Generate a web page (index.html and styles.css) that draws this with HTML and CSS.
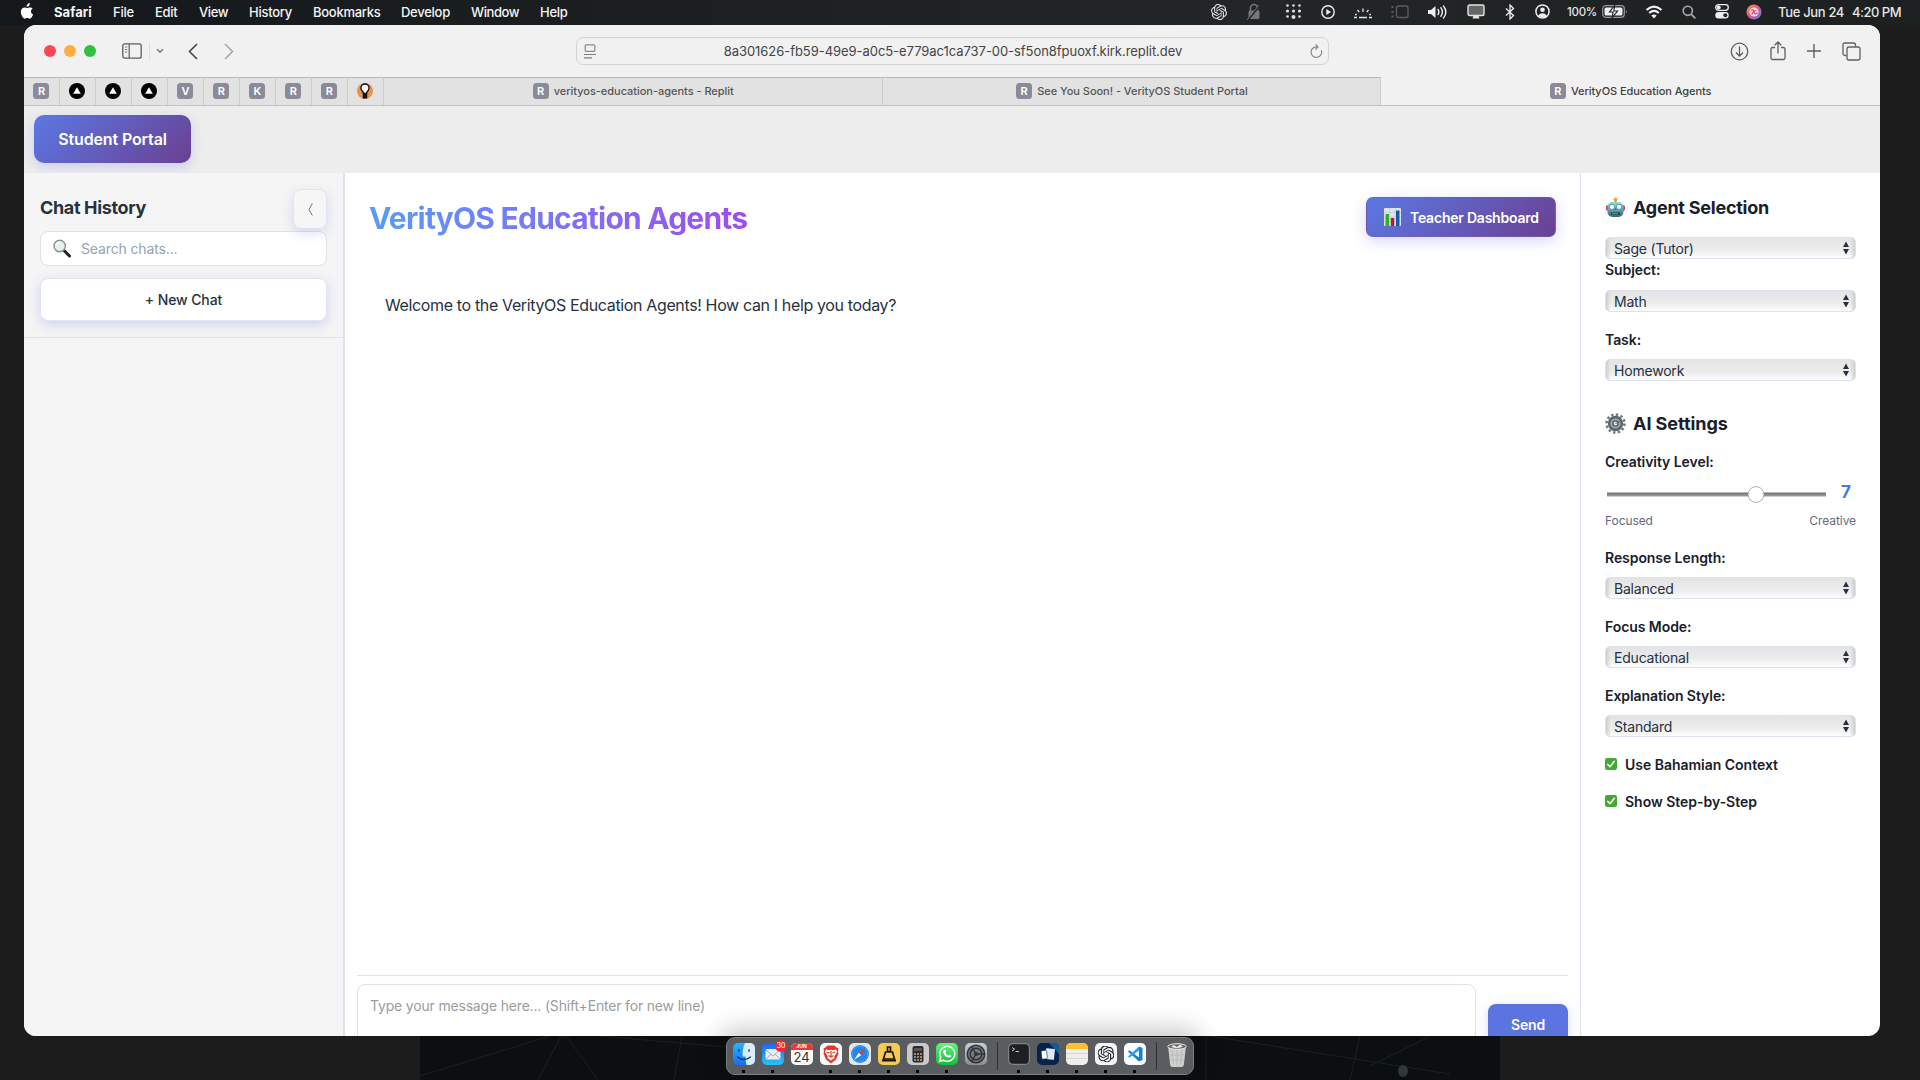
FILE: index.html
```html
<!DOCTYPE html>
<html lang="en">
<head>
<meta charset="utf-8">
<title>VerityOS Education Agents</title>
<link rel="stylesheet" href="styles.css">
</head>
<body>
<svg width="0" height="0" class="defs">
  <defs>
    <symbol id="knot" viewBox="0 0 24 24"><path fill="currentColor" d="M22.2819 9.8211a5.9847 5.9847 0 0 0-.5157-4.9108 6.0462 6.0462 0 0 0-6.5098-2.9A6.0651 6.0651 0 0 0 4.9807 4.1818a5.9847 5.9847 0 0 0-3.9977 2.9 6.0462 6.0462 0 0 0 .7427 7.0966 5.98 5.98 0 0 0 .511 4.9107 6.051 6.051 0 0 0 6.5146 2.9001A5.9847 5.9847 0 0 0 13.2599 24a6.0557 6.0557 0 0 0 5.7718-4.2058 5.9894 5.9894 0 0 0 3.9977-2.9001 6.0557 6.0557 0 0 0-.7475-7.0729zm-9.022 12.6081a4.4755 4.4755 0 0 1-2.8764-1.0408l.1419-.0804 4.7783-2.7582a.7948.7948 0 0 0 .3927-.6813v-6.7369l2.02 1.1686a.071.071 0 0 1 .038.052v5.5826a4.504 4.504 0 0 1-4.4945 4.4944zm-9.6607-4.1254a4.4708 4.4708 0 0 1-.5346-3.0137l.142.0852 4.783 2.7582a.7712.7712 0 0 0 .7806 0l5.8428-3.3685v2.3324a.0804.0804 0 0 1-.0332.0615L9.74 19.9502a4.4992 4.4992 0 0 1-6.1408-1.6464zM2.3408 7.8956a4.485 4.485 0 0 1 2.3655-1.9728V11.6a.7664.7664 0 0 0 .3879.6765l5.8144 3.3543-2.0201 1.1685a.0757.0757 0 0 1-.071 0l-4.8303-2.7865A4.504 4.504 0 0 1 2.3408 7.872zm16.5963 3.8558L13.1038 8.364 15.1192 7.2a.0757.0757 0 0 1 .071 0l4.8303 2.7913a4.4944 4.4944 0 0 1-.6765 8.1042v-5.6772a.79.79 0 0 0-.407-.667zm2.0107-3.0231l-.142-.0852-4.7735-2.7818a.7759.7759 0 0 0-.7854 0L9.409 9.2297V6.8974a.0662.0662 0 0 1 .0284-.0615l4.8303-2.7866a4.4992 4.4992 0 0 1 6.6802 4.66zM8.3065 12.863l-2.02-1.1638a.0804.0804 0 0 1-.038-.0567V6.0742a4.4992 4.4992 0 0 1 7.3757-3.4537l-.142.0805L8.704 5.459a.7948.7948 0 0 0-.3927.6813zm1.0976-2.3654l2.602-1.4998 2.6069 1.4998v2.9994l-2.5974 1.4997-2.6067-1.4997Z"/></symbol>
    <symbol id="updown" viewBox="0 0 6 14"><path d="M3 0.500 6 6H0zM3 13.500 6 8H0z" fill="#253142"/></symbol>
    <symbol id="check" viewBox="0 0 12 12"><rect width="12" height="12" rx="2" fill="#43a935"/><path d="M2.800 6.400 5 8.800 9.300 3.300" fill="none" stroke="#fff" stroke-width="1.500" stroke-linecap="round" stroke-linejoin="round"/></symbol>
    <symbol id="vercel" viewBox="0 0 16 16"><circle cx="8" cy="8" r="8" fill="#000"/><path d="M8 4.300 11.800 10.800H4.200z" fill="#fff"/></symbol>
    <linearGradient id="gFinder" x2="0" y2="1"><stop stop-color="#25b6f8"/><stop offset="1" stop-color="#1b6cf0"/></linearGradient>
    <linearGradient id="gMail" x2="0" y2="1"><stop stop-color="#1d63ee"/><stop offset="1" stop-color="#2ac3fb"/></linearGradient>
    <linearGradient id="gGreen" x2="0" y2="1"><stop stop-color="#5ff777"/><stop offset="1" stop-color="#12bd3a"/></linearGradient>
    <linearGradient id="gGray" x2="0" y2="1"><stop stop-color="#c3d0d8"/><stop offset="1" stop-color="#8d8d90"/></linearGradient>
    <linearGradient id="gSiri" x2="1" y2="1"><stop stop-color="#ff9d2e"/><stop offset=".45" stop-color="#f0527a"/><stop offset="1" stop-color="#3f86f7"/></linearGradient>
    <linearGradient id="gSlider" x2="0" y2="1"><stop stop-color="#6d6d6d"/><stop offset="1" stop-color="#a3a3a3"/></linearGradient>
    <linearGradient id="gRobot" x2="0" y2="1"><stop stop-color="#a5d8dc"/><stop offset="1" stop-color="#2c6b74"/></linearGradient>
  </defs>
</svg>
<svg class="wallpaper" viewBox="0 0 1080 44" width="1080" height="44">
  <rect width="1080" height="44" fill="#0b0f12"/>
  <g fill="none" stroke="#1a2024" stroke-width="1"><path d="M0 40 130 0M141 1h6l31 43M140 2 118 44M180 0l160 14M262 0l-8 44M790 0l240 38M786 0v44M940 0l-10 44M950 30l60-30"/></g>
  <ellipse cx="983" cy="35" rx="5" ry="6" fill="#3a4145" opacity=".8"/>
</svg>
<header class="menubar">
  <svg class="apple" viewBox="0 0 14 17" width="14" height="17"><path d="M9.800 0c.1 1.100-.3 2-.9 2.700-.6.700-1.500 1.200-2.300 1.100-.1-1 .3-2 .9-2.600C8.100.5 9.100.1 9.800 0zM12.600 5.700c-1 .6-1.600 1.500-1.600 2.700 0 1.400.8 2.400 2.100 3-.3.900-.7 1.800-1.300 2.600-.6.900-1.200 1.700-2.200 1.700-.9 0-1.300-.6-2.400-.6s-1.500.6-2.400.6c-1 0-1.700-.9-2.400-1.900C1 11.700.3 8.700 1.400 6.500c.7-1.300 2-2.100 3.300-2.100 1 0 1.900.7 2.500.7.600 0 1.700-.8 3-.7 1 0 1.900.5 2.400 1.300z" fill="#fff"/></svg>
  <nav class="menus"><b class="m1">Safari</b><span class="m2">File</span><span class="m3">Edit</span><span class="m4">View</span><span class="m5">History</span><span class="m6">Bookmarks</span><span class="m7">Develop</span><span class="m8">Window</span><span>Help</span></nav>
  <div class="status">
    <svg width="16" height="16"><use href="#knot"/></svg>
    <svg width="14" height="18" viewBox="0 0 14 18"><path d="M3.500 8V5a3.500 3.500 0 0 1 7 0v3" fill="none" stroke="#777" stroke-width="1.600"/><rect x="1.500" y="7.500" width="11" height="8.500" rx="1.500" fill="#777"/><path d="M13 2 1 17" stroke="#222" stroke-width="2"/><path d="M12 2 0 17" stroke="#777"/></svg>
    <svg width="17" height="17" viewBox="0 0 17 17" fill="#ddd"><circle cx="2.500" cy="2.500" r="1.300"/><circle cx="8.500" cy="2.500" r="1.300"/><circle cx="14.500" cy="2.500" r="1.300"/><circle cx="2.500" cy="8" r="1.600"/><circle cx="8.500" cy="8" r="1.600"/><circle cx="14.500" cy="8" r="1.600"/><circle cx="2.500" cy="13.500" r="1.300"/><circle cx="8.500" cy="14" r="2"/><circle cx="14.500" cy="13.500" r="1.300"/></svg>
    <svg width="14" height="14" viewBox="0 0 14 14"><circle cx="7" cy="7" r="6.200" fill="none" stroke="#eee" stroke-width="1.400"/><path d="M5.300 4v6l4.700-3z" fill="#eee"/></svg>
    <svg width="20" height="14" viewBox="0 0 20 14"><path d="M10 3.500v3.500M4.500 5l1.700 2M15.500 5l-1.700 2M2 9.500h1.700M16.300 9.500H18M1 12.500h3M6 12.500h8M16 12.500h3" fill="none" stroke="#e5e5e5" stroke-width="1.300"/></svg>
    <svg width="18" height="14" viewBox="0 0 18 14"><rect x="5.500" y="1" width="11.500" height="11.500" rx="2" fill="none" stroke="#5c5c5c" stroke-width="1.400"/><path d="M1.500 1v2M1.500 6v2M1.500 10.500v2" stroke="#5c5c5c" stroke-width="2"/></svg>
    <svg width="21" height="14" viewBox="0 0 21 14"><path d="M1 5h3l4.500-4v12L4 9H1z" fill="#eee"/><path d="M11 4.500q1.800 2.500 0 5M13.800 2.700q3.200 4.300 0 8.600M16.500 1q4.700 6 0 12" fill="none" stroke="#eee" stroke-width="1.400" stroke-linecap="round"/></svg>
    <svg width="18" height="15" viewBox="0 0 18 15"><rect x="1" y="1" width="16" height="10.500" rx="1.500" fill="#666" stroke="#e4e4e4" stroke-width="1.400"/><path d="M6.500 11.500h5l1 3h-7z" fill="#e4e4e4"/></svg>
    <svg width="10" height="16" viewBox="0 0 10 16"><path d="M1 4.500 8.500 11.500 5 15V1l3.500 3.500L1 11.500" fill="none" stroke="#eee" stroke-width="1.300"/></svg>
    <svg width="15" height="15" viewBox="0 0 15 15"><circle cx="7.500" cy="7.500" r="6.600" fill="none" stroke="#eee" stroke-width="1.500"/><circle cx="7.500" cy="5.800" r="2.300" fill="#eee"/><path d="M3.200 12c1-3.600 7.600-3.600 8.600 0-2 2-6.600 2-8.600 0z" fill="#eee"/></svg>
    <div class="battery"><span>100%</span><svg width="26" height="13" viewBox="0 0 26 13"><rect x=".7" y=".7" width="21.600" height="11.600" rx="3" fill="none" stroke="#999" stroke-width="1.200"/><rect x="2.500" y="2.500" width="18" height="8" rx="1.500" fill="#eee"/><path d="M12.500.5 7.500 7h3.500l-.7 5.500L15.500 6H12z" fill="#eee" stroke="#222628" stroke-width="1.200"/><path d="M23.800 4.500q1.800 2 0 4z" fill="#999"/></svg></div>
    <svg width="18" height="14" viewBox="0 0 18 14"><path d="M1.500 5q7.500-6.800 15 0M4.200 8q4.800-4.200 9.600 0" fill="none" stroke="#f0f0f0" stroke-width="2.200"/><path d="M9 13.500 6.300 10.500q2.700-2.200 5.400 0z" fill="#f0f0f0"/></svg>
    <svg width="14" height="14" viewBox="0 0 14 14"><circle cx="5.800" cy="5.800" r="4.600" fill="none" stroke="#aaa" stroke-width="1.600"/><path d="m9.300 9.300 4 4" stroke="#aaa" stroke-width="1.800"/></svg>
    <svg width="14" height="15" viewBox="0 0 14 15"><rect x=".7" y=".7" width="12.600" height="5.600" rx="2.800" fill="none" stroke="#eee" stroke-width="1.300"/><circle cx="3.700" cy="3.500" r="2" fill="#eee"/><rect x=".3" y="8" width="13.400" height="6.500" rx="3.200" fill="#eee"/><circle cx="10.300" cy="11.300" r="2" fill="#222628"/></svg>
    <svg width="16" height="16" viewBox="0 0 16 16"><circle cx="8" cy="8" r="7.600" fill="url(#gSiri)"/><circle cx="8" cy="8" r="4.600" fill="#fff" opacity=".75"/><path d="M5 6.500q2-2 3 1.500t3.500.5M6 10.500q1-4 4.500-4" fill="none" stroke="#d0508e" stroke-width="1.200"/></svg>
    <time class="clock"><span class="day">Tue Jun 24</span><span class="hour">4:20 PM</span></time>
  </div>
</header>

<section class="window">
  <div class="toolbar">
    <div class="lights"><i class="red"></i><i class="amber"></i><i class="green"></i></div>
    <svg class="tb-side" width="20" height="16" viewBox="0 0 20 16"><rect x=".8" y=".8" width="18.400" height="14.400" rx="2" fill="none" stroke="#5d5d5d" stroke-width="1.300"/><path d="M7.200 1v14" stroke="#5d5d5d" stroke-width="1.200"/><path d="M3 4h2.200M3 6.500h2.200M3 9h2.200" stroke="#777"/></svg>
    <i class="tb-split"></i>
    <svg class="tb-chev" width="8" height="6" viewBox="0 0 8 6"><path d="m1 1.200 3 3 3-3" fill="none" stroke="#777" stroke-width="1.500"/></svg>
    <svg class="tb-back" width="10" height="17" viewBox="0 0 10 17"><path d="M9 1 1.500 8.500 9 16" fill="none" stroke="#4c4c4c" stroke-width="1.700"/></svg>
    <svg class="tb-fwd" width="10" height="17" viewBox="0 0 10 17"><path d="m1 1 7.500 7.500L1 16" fill="none" stroke="#a9a9a9" stroke-width="1.700"/></svg>
    <div class="address">
      <svg width="12" height="15" viewBox="0 0 12 15"><rect x="1.200" y=".8" width="9.600" height="6.600" rx="1" fill="none" stroke="#8a8a8a" stroke-width="1.200"/><path d="M0 10.500h12M0 13.800h8" stroke="#7d7d7d" stroke-width="1.200"/></svg>
      <span class="url">8a301626-fb59-49e9-a0c5-e779ac1ca737-00-sf5on8fpuoxf.kirk.replit.dev</span>
      <svg width="13" height="15" viewBox="0 0 13 15"><path d="M11.300 6.200a5.300 5.300 0 1 1-4.800-3.400h1M5.500.3 8 2.900 5.500 5.500" fill="none" stroke="#888" stroke-width="1.200"/></svg>
    </div>
    <div class="tb-right">
      <svg width="19" height="19" viewBox="0 0 19 19" fill="none" stroke="#606060" stroke-width="1.300"><circle cx="9.500" cy="9.500" r="8.300"/><path d="M9.500 4.500v9M6 10.500l3.500 3.500 3.500-3.500"/></svg>
      <svg width="16" height="20" viewBox="0 0 16 20" fill="none" stroke="#606060" stroke-width="1.300"><path d="M5 6.500H2.500a1.500 1.500 0 0 0-1.500 1.500v9A1.500 1.500 0 0 0 2.500 18.500h11a1.500 1.500 0 0 0 1.500-1.500V8a1.500 1.500 0 0 0-1.500-1.500H11M8 12.500V1.200M4.700 4.200 8 1l3.300 3.200"/></svg>
      <svg width="14" height="14" viewBox="0 0 14 14" stroke="#606060" stroke-width="1.400"><path d="M7 0v14M0 7h14"/></svg>
      <svg width="19" height="19" viewBox="0 0 19 19" fill="none" stroke="#606060" stroke-width="1.300"><path d="M4.500 13.500H3A2 2 0 0 1 1 11.500V3a2 2 0 0 1 2-2h8.500a2 2 0 0 1 2 2v1.500"/><rect x="5" y="5" width="13" height="13" rx="2"/></svg>
    </div>
  </div>
  <div class="tabs">
    <div class="pin"><i class="fav">R</i></div><div class="pin"><svg width="16" height="16"><use href="#vercel"/></svg></div><div class="pin"><svg width="16" height="16"><use href="#vercel"/></svg></div><div class="pin"><svg width="16" height="16"><use href="#vercel"/></svg></div><div class="pin"><i class="fav">V</i></div><div class="pin"><i class="fav">R</i></div><div class="pin"><i class="fav">K</i></div><div class="pin"><i class="fav">R</i></div><div class="pin"><i class="fav">R</i></div>
    <div class="pin"><svg width="16" height="16" viewBox="0 0 16 16"><circle cx="8" cy="8" r="8" fill="#e8924a"/><path d="M8 .3a4.800 4.800 0 0 0-4.800 4.800c0 2.400 2.300 3.300 2.600 6v4.500h4.400V11c.3-2.600 2.600-3.500 2.600-5.900A4.800 4.800 0 0 0 8 .3z" fill="#111"/><path d="M8 1.700a3.400 3.400 0 0 0-3.400 3.400c0 2 2 2.800 2.500 4.700h1.800c.5-1.900 2.500-2.700 2.500-4.700A3.400 3.400 0 0 0 8 1.700z" fill="#fff"/></svg></div>
    <div class="tab"><i class="fav">R</i><span>verityos-education-agents - Replit</span></div>
    <div class="tab"><i class="fav">R</i><span>See You Soon! - VerityOS Student Portal</span></div>
    <div class="tab active"><i class="fav">R</i><span>VerityOS Education Agents</span></div>
  </div>
  <div class="portal-head"><div class="portal-btn">Student Portal</div></div>
  <div class="columns">
    <aside class="history">
      <div class="history-top">
        <div class="history-title"><h3>Chat History</h3><div class="collapse"><svg width="5" height="13" viewBox="0 0 5 13"><path d="M4.300.5 1 6.500l3.300 6" fill="none" stroke="#64748b"/></svg></div></div>
        <div class="search"><svg width="18" height="19" viewBox="0 0 18 19"><path d="m11 11.500 5.500 5.500" stroke="#222" stroke-width="3" stroke-linecap="round"/><circle cx="6.700" cy="7" r="5.700" fill="#e9eeee" stroke="#8b8e90" stroke-width="1.400"/><path d="M3.500 6q1-2.500 3.500-2.500" fill="none" stroke="#fff" stroke-width="1.300"/></svg><span>Search chats...</span></div>
        <div class="new-chat">+ New Chat</div>
      </div>
    </aside>
    <main class="chat">
      <div class="chat-head">
        <h1>VerityOS Education Agents</h1>
        <div class="dash-btn"><svg width="17" height="18" viewBox="0 0 17 18"><rect width="17" height="18" rx="1" fill="#dfe6ea"/><path d="M0 4.500h17M0 9h17M0 13.500h17M5.700 0v18M11.300 0v18" stroke="#b8c4ca" stroke-width=".6"/><path d="M1.500 6h3.500v12H1.500z" fill="#27b32b"/><path d="M6.800 10h3.400v8H6.800z" fill="#c4122f"/><path d="M12 2.500h3.500V18H12z" fill="#1558b0"/></svg><span>Teacher Dashboard</span></div>
      </div>
      <p class="welcome">Welcome to the VerityOS Education Agents! How can I help you today?</p>
      <div class="composer">
        <div class="message-box">Type your message here... (Shift+Enter for new line)</div>
        <div class="send">Send</div>
      </div>
    </main>
    <aside class="settings">
      <h2><svg width="21" height="21" viewBox="0 0 21 21"><rect x="1" y="8" width="19" height="6" rx="2" fill="#d53a50"/><circle cx="10.500" cy="2.300" r="1.900" fill="#f0a52c"/><path d="M9.500 3.500h2V6h-2z" fill="#999"/><rect x="2.500" y="5" width="16" height="15" rx="5" fill="url(#gRobot)"/><circle cx="7" cy="9.800" r="2.600" fill="#fff" stroke="#3da8c0"/><circle cx="14" cy="9.800" r="2.600" fill="#fff" stroke="#3da8c0"/><path d="m10.500 10.500 1.300 2.500H9.200z" fill="#d1343f"/><path d="M6 15.500h9v2H6z" fill="#234"/><path d="M7.500 16.500h6" stroke="#b8dade" stroke-dasharray="1 1"/></svg><span class="agent-title">Agent Selection</span></h2>
      <div class="select first"><span>Sage (Tutor)</span><svg width="6" height="14"><use href="#updown"/></svg></div>
      <label class="tight">Subject:</label>
      <div class="select"><span>Math</span><svg width="6" height="14"><use href="#updown"/></svg></div>
      <label>Task:</label>
      <div class="select"><span>Homework</span><svg width="6" height="14"><use href="#updown"/></svg></div>
      <h2 class="second"><svg width="21" height="21" viewBox="0 0 21 21"><circle cx="10.500" cy="10.500" r="9" fill="none" stroke="#6f7a80" stroke-width="2.600" stroke-dasharray="2.360 2.360"/><circle cx="10.500" cy="10.500" r="6.400" fill="#a3abb0" stroke="#5b666c" stroke-width="2.600"/><circle cx="10.500" cy="10.500" r="2.600" fill="#e4e8ea" stroke="#4d565b" stroke-width="1.300"/><path d="m10.500 10.500 4.500-2" stroke="#59636a"/></svg><span>AI Settings</span></h2>
      <label>Creativity Level:</label>
      <div class="slider"><svg width="220" height="17" viewBox="0 0 220 17"><rect x="0" y="6.500" width="219" height="4" fill="url(#gSlider)"/><circle cx="149" cy="8.500" r="7.900" fill="#fff" stroke="#999" stroke-width=".8"/></svg><b>7</b></div>
      <div class="range"><span>Focused</span><span>Creative</span></div>
      <label class="after-range">Response Length:</label>
      <div class="select"><span>Balanced</span><svg width="6" height="14"><use href="#updown"/></svg></div>
      <label>Focus Mode:</label>
      <div class="select"><span>Educational</span><svg width="6" height="14"><use href="#updown"/></svg></div>
      <label>Explanation Style:</label>
      <div class="select"><span>Standard</span><svg width="6" height="14"><use href="#updown"/></svg></div>
      <label class="tick"><svg width="12" height="12"><use href="#check"/></svg><span>Use Bahamian Context</span></label>
      <label class="tick"><svg width="12" height="12"><use href="#check"/></svg><span>Show Step-by-Step</span></label>
    </aside>
  </div>
</section>

<div class="dock">
  <div class="app on"><svg width="22" height="22" viewBox="0 0 22 22"><rect width="22" height="22" rx="5" fill="url(#gFinder)"/><path d="M12 0h5a5 5 0 0 1 5 5v12a5 5 0 0 1-5 5h-3.500q-1-4-1-8.500H9.500Q9.500 5 12 0z" fill="#d9ecfb"/><path d="M6 6.500v2M16 6.500v2M4.500 14q6.500 5 13 0" fill="none" stroke="#12334f" stroke-width="1.200" stroke-linecap="round"/></svg></div>
  <div class="app on"><svg width="22" height="22" viewBox="0 0 22 22"><rect width="22" height="22" rx="5" fill="url(#gMail)"/><rect x="3.500" y="6" width="15" height="10.500" rx="1.500" fill="#e8eef2"/><path d="m4 7 7 6 7-6M4 16l5-5M18 16l-5-5" fill="none" stroke="#9aa5ad" stroke-width=".9"/></svg><em class="badge">30</em></div>
  <div class="app"><div class="cal"><small>JUN</small><span>24</span></div></div>
  <div class="app on"><svg width="22" height="22" viewBox="0 0 22 22"><rect width="22" height="22" rx="5" fill="#fafafa"/><path d="M7.500 2.500h7l2 2 2 1-.5 3 .5 2-2.500 6-5 4-5-4-2.500-6 .5-2-.5-3 2-1z" fill="#e8352b"/><path d="m6 6.500 3 .8 2-.6 2 .6 3-.8 1.200 2.500-3 4.500.5 1.500-3.700 2.500L7.300 15l.5-1.500-3-4.500z" fill="#fff"/><path d="m6.500 9 3 .8M15.500 9l-3 .8M11 8v5M8.500 12.500 11 14l2.500-1.500" stroke="#e8352b" stroke-width="1.200" fill="none"/></svg></div>
  <div class="app on"><svg width="22" height="22" viewBox="0 0 22 22"><rect width="22" height="22" rx="5" fill="#e3e6e8"/><circle cx="11" cy="11" r="9" fill="#2587e8"/><circle cx="11" cy="11" r="7.800" fill="none" stroke="#9fd0ff" stroke-dasharray=".6 1.400"/><path d="m17 5-4.800 7.200-2.400-2.400z" fill="#e8382f"/><path d="m5 17 4.800-7.200 2.400 2.400z" fill="#f5f5f5"/></svg></div>
  <div class="app on"><svg width="22" height="22" viewBox="0 0 22 22"><rect width="22" height="22" rx="5" fill="#f5ca54"/><path d="M9.500 4h3v4.500h-3zM7.500 9h7l2 7h-11z" fill="none" stroke="#1b1708" stroke-width="1.700"/><path d="M4 17.500h14" stroke="#1b1708" stroke-width="2"/></svg></div>
  <div class="app on"><svg width="22" height="22" viewBox="0 0 22 22"><rect width="22" height="22" rx="5" fill="#c9c9c9"/><rect x="5.500" y="3" width="11" height="16.500" rx="2" fill="#2a2c2e"/><path d="M7 5h8v3H7z" fill="#555"/><g fill="#aaa"><circle cx="8" cy="11" r="1"/><circle cx="11" cy="11" r="1"/><circle cx="8" cy="14" r="1"/><circle cx="11" cy="14" r="1"/><circle cx="8" cy="17" r="1"/><circle cx="11" cy="17" r="1"/></g><g fill="#ff9130"><circle cx="14" cy="11" r="1.100"/><circle cx="14" cy="14" r="1.100"/><circle cx="14" cy="17" r="1.100"/></g></svg></div>
  <div class="app on"><svg width="22" height="22" viewBox="0 0 22 22"><rect width="22" height="22" rx="5" fill="url(#gGreen)"/><path d="m3.500 18.500 1.200-4A7.500 7.500 0 1 1 7.500 17.300z" fill="none" stroke="#fff" stroke-width="1.500"/><path d="M8 7q1-1 1.500 0l.7 1.700-.8 1q1 2 3 2.800l1-1 1.900.9q.4 2-2 2.200Q8 14 7.200 9.300 7.200 8 8 7z" fill="#fff"/></svg></div>
  <div class="app"><svg width="22" height="22" viewBox="0 0 22 22"><rect width="22" height="22" rx="5" fill="url(#gGray)"/><circle cx="11" cy="11" r="8.700" fill="#777b7e" stroke="#303436" stroke-width="1.500"/><circle cx="11" cy="11" r="5.800" fill="none" stroke="#303436" stroke-width="1.500"/><path d="M11 11h8M11 11 7 4M11 11l-4 7" stroke="#303436" stroke-width="1.300"/><circle cx="11" cy="11" r="2" fill="#303436"/></svg></div>
  <i class="sep"></i>
  <div class="app on"><svg width="22" height="22" viewBox="0 0 22 22"><rect x=".6" y=".6" width="20.800" height="20.800" rx="4.500" fill="#1d1f20" stroke="#7d8585" stroke-width="1.200"/><path d="m4 4.500 2.500 1.700L4 8M7.500 8.500h3.500" fill="none" stroke="#ddd" stroke-width=".9"/></svg></div>
  <div class="app on"><svg width="22" height="22" viewBox="0 0 22 22"><rect width="22" height="22" rx="5" fill="#07224d"/><path d="M12 0h5a5 5 0 0 1 5 5v6z" fill="#135d9b"/><rect x="8.500" y="5.500" width="9" height="11" rx="1" fill="#dfe8f5" transform="rotate(6 13 11)"/><rect x="4.500" y="7.500" width="5.500" height="8.500" rx="1" fill="#fff" stroke="#07224d" stroke-width=".6" transform="rotate(-6 7 12)"/></svg></div>
  <div class="app on"><svg width="22" height="22" viewBox="0 0 22 22"><rect width="22" height="22" rx="5" fill="#f1efec"/><path d="M0 6V5a5 5 0 0 1 5-5h12a5 5 0 0 1 5 5v1z" fill="#fcc02e"/><path d="M0 10.500h22M0 15.500h22" stroke="#d4d1cc" stroke-width=".8"/></svg></div>
  <div class="app on gpt"><svg width="22" height="22"><use href="#knot"/></svg></div>
  <div class="app on"><svg width="22" height="22" viewBox="0 0 22 22"><rect width="22" height="22" rx="5" fill="#fbfcfd"/><path d="M15 3.500 18.500 5v12L15 18.500 4 8.500 5.300 7.200 15 14.600z" fill="#1b7fd0"/><path d="M15 3.500v4L5.300 14.800 4 13.500z" fill="#2aa0ef"/></svg></div>
  <i class="sep last"></i>
  <div class="app"><svg width="22" height="25" viewBox="0 0 22 25"><path d="m2 3 2.200 19q.3 2 2.500 2h8.600q2.200 0 2.500-2L20 3z" fill="#cfcfcf"/><path d="m6 6 1.500 15M11 6v16M16 6l-1.500 15M4 12h14M4.500 17h13" stroke="#b5b5b5" stroke-width=".8"/><ellipse cx="11" cy="3.500" rx="9.300" ry="2.800" fill="#676767" stroke="#eee"/><path d="m5 3.500 3-1.500 3 2 3-2.500 3 2-4 1.500H8z" fill="#e7e4dc"/></svg></div>
</div>
</body>
</html>
```
FILE: styles.css
```css
* { box-sizing: border-box; }
body { margin: 0; width: 1920px; height: 1080px; overflow: hidden; background: #1c1c1c; font-family: Inter, "Noto Sans", sans-serif; position: relative; color: #1e2633; }
svg { display: block; flex: none; }
h1, h2, h3, p { margin: 0; }
i, em { font-style: normal; }
span, b, h3, p { white-space: nowrap; }
.defs { position: absolute; }
.wallpaper { position: absolute; left: 420px; top: 1036px; }

.menubar { height: 25px; padding-bottom: 2px; background: linear-gradient(90deg, #15181a, #222628 65%, #1d2021); color: #f4f4f4; font-size: 13px; font-weight: 500; letter-spacing: -0.27px; display: flex; align-items: center; }
.apple { margin: 0 20px 1px 20px; }
.menus { display: flex; width: 1147px; }
.menus b { width: 59px; font-weight: 700; letter-spacing: 0.05px; }
.m2 { width: 42px; } .m3 { width: 44px; } .m4 { width: 50px; } .m5 { width: 64px; } .m6 { width: 88px; } .m7 { width: 70px; } .m8 { width: 69px; }
.m4, .m8 { letter-spacing: -0.4px; }
.status { display: grid; grid-template-columns: 36px 34px 44px 26px 44px 30px 44px 33px 35px 30px 79px 35px 36px 30px 34px 149px; align-items: center; justify-items: center; color: #e6e6e6; }
.battery { display: flex; align-items: center; gap: 5px; width: 79px; padding-left: 10px; font-size: 11.5px; }
.battery span { width: 30px; }
.clock { justify-self: start; display: flex; padding-left: 7px; }
.day { width: 74px; letter-spacing: -0.33px; }
.hour { letter-spacing: -0.5px; }

.window { position: relative; margin: 0 40px 0 24px; height: 1011px; border-radius: 12px; overflow: hidden; background: #fff; display: flex; flex-direction: column; }
.toolbar { height: 52px; background: #f1f1f1; display: flex; align-items: center; padding-left: 20px; flex: none; }
.lights { display: flex; gap: 8px; }
.lights i { width: 12px; height: 12px; border-radius: 50%; }
.red { background: #fc4653; } .amber { background: #fdae3c; } .green { background: #30c140; }
.tb-side { margin-left: 26px; }
.tb-split { width: 1px; height: 18px; background: #dedede; margin-left: 7px; }
.tb-chev { margin-left: 6px; }
.tb-back { margin-left: 24px; }
.tb-fwd { margin-left: 26px; }
.address { width: 753px; height: 28px; margin-left: 342px; border: 1px solid #d4d4d4; border-radius: 7px; display: flex; align-items: center; justify-content: space-between; padding: 0 5px 0 7px; font-size: 13px; letter-spacing: -0.05px; color: #444; }
.tb-right { width: 131px; margin-left: 401px; display: flex; justify-content: space-between; align-items: center; }

.tabs { height: 29px; display: flex; flex: none; border-bottom: 1px solid #c2c2c2; }
.pin, .tab { background: #e2e2e2; border-top: 1px solid #b6b6b6; border-right: 1px solid #cbcbcb; display: flex; align-items: center; justify-content: center; padding-bottom: 1px; }
.pin { width: 36px; }
.tab { width: 499px; gap: 5px; padding-left: 1px; font-size: 11px; font-weight: 500; letter-spacing: -0.03px; color: #555; }
.tab.active { background: #f1f1f1; border-color: transparent; color: #3f3f3f; letter-spacing: -0.07px; }
.fav { width: 16px; height: 16px; border-radius: 3.5px; background: #8a8b98; color: #fff; font-size: 11px; font-weight: 600; line-height: 17px; text-align: center; }

.portal-head { height: 67px; background: #ededed; padding: 9px 10px; flex: none; }
.portal-btn { width: 157px; height: 48px; border-radius: 10px; background: linear-gradient(135deg, #5b78e4, #6b4092); box-shadow: 0 4px 12px rgba(102, 110, 234, .25); color: #fff; font-size: 16px; font-weight: 600; letter-spacing: -0.13px; display: flex; align-items: center; justify-content: center; }

.columns { display: flex; flex: 1; min-height: 0; }
.history { width: 321px; background: #f5f5f5; border-right: 2px solid #dbe3ed; }
.history-top { padding: 16px 16px; height: 165px; border-bottom: 1px solid #dfe3ea; }
.history-title { display: flex; justify-content: space-between; height: 42px; }
h3 { font-size: 18px; font-weight: 650; line-height: 37px; letter-spacing: -0.35px; color: #28323f; }
.collapse { width: 34px; height: 40px; border: 1px solid #dfe5ee; border-radius: 8px; background: #f6f6f6; box-shadow: 0 4px 12px rgba(102, 110, 234, .22); display: flex; align-items: center; justify-content: center; position: relative; }
.search { width: 287px; height: 35px; border: 1px solid #dbe2ea; border-radius: 8px; background: #fff; display: flex; align-items: center; gap: 10px; padding-left: 12px; font-size: 14px; letter-spacing: -0.13px; color: #94a3b8; }
.new-chat { width: 287px; height: 43px; margin-top: 12px; border: 1px solid #dfe5ee; border-radius: 8px; background: #fff; box-shadow: 0 4px 12px rgba(102, 110, 234, .25); display: flex; align-items: center; justify-content: center; font-size: 14px; font-weight: 500; letter-spacing: -0.1px; color: #28323f; }

.chat { flex: 1; padding: 24px 12px 0; display: flex; flex-direction: column; }
.chat-head { display: flex; justify-content: space-between; padding: 0 12px; height: 40px; }
h1 { font-size: 30px; font-weight: 700; line-height: 42px; height: 42px; letter-spacing: -0.78px; background: linear-gradient(90deg, #5a9cf6, #a04bf0); -webkit-background-clip: text; background-clip: text; color: transparent; white-space: nowrap; }
.dash-btn { width: 190px; height: 40px; border-radius: 7px; background: linear-gradient(135deg, #5b78e4, #6b4092); border: 1px solid rgba(120, 90, 180, .6); box-shadow: 0 4px 14px rgba(102, 110, 234, .28); display: flex; align-items: center; gap: 9px; padding-left: 17px; color: #fff; font-size: 14px; font-weight: 600; letter-spacing: -0.22px; }
.welcome { font-size: 16px; line-height: 24px; margin: 56px 0 0 28px; flex: 1; letter-spacing: -0.36px; color: #28323f; }
.composer { height: 61px; border-top: 1px solid #dbe2ec; padding-top: 8px; display: flex; justify-content: space-between; flex: none; }
.message-box { width: 1119px; height: 72px; border: 1px solid #dbe2ec; border-radius: 8px; padding: 10px 12px; font-size: 14px; line-height: 22px; letter-spacing: -0.18px; color: #9c9c9c; }
.send { width: 80px; height: 44px; margin-top: 20px; border-radius: 8px; background: #5b74e0; box-shadow: 0 3px 12px rgba(102, 110, 234, .25); color: #fff; font-size: 14px; font-weight: 600; line-height: 42px; letter-spacing: -0.2px; text-align: center; }

.settings { width: 300px; border-left: 1px solid #dbe2ec; padding: 23px 24px 0; }
.settings h2 { display: flex; align-items: center; gap: 7px; height: 22px; font-size: 18px; font-weight: 650; letter-spacing: -0.05px; color: #19202b; }
.settings .agent-title { letter-spacing: -0.24px; }
.settings .second { margin-top: 31px; }
.select { height: 22px; border: 1px solid #dbe2ec; border-radius: 5px; background: linear-gradient(90deg, #cfcfcf, rgba(230, 230, 230, 0) 5px, rgba(230, 230, 230, 0) calc(100% - 5px), #cfcfcf), linear-gradient(#e4e4e4, #ececec 60%, #fdfdfd); display: flex; align-items: center; justify-content: space-between; padding: 0 6px 0 8px; font-size: 14px; letter-spacing: -0.2px; color: #253142; }
.first { margin-top: 19px; }
label { display: flex; align-items: center; height: 20px; margin: 17px 0 10px; font-size: 14px; font-weight: 600; letter-spacing: -0.07px; color: #19202b; }
label.tight { height: 19px; margin: 1px 0 11px; }
.slider { display: flex; height: 25px; justify-content: space-between; padding: 1px 5px 0 2px; }
.slider svg { margin-top: 4px; }
.slider b { font-size: 17px; line-height: 20px; color: #3b7bf0; }
.range { display: flex; justify-content: space-between; margin-top: 6px; height: 17px; line-height: 17px; font-size: 12px; letter-spacing: -0.08px; color: #626b80; }
label.after-range { margin-top: 18px; }
label.tick { gap: 8px; margin: 17px 0 0; letter-spacing: -0.02px; }

.dock { position: absolute; left: 726px; top: 1037px; width: 468px; height: 38px; border-radius: 9px; background: #595d5f; border: 1px solid #7c7f80; padding: 0 2px; display: flex; box-shadow: 0 -2px 24px 6px rgba(0, 0, 0, .22); }
.app { width: 29px; height: 36px; padding-top: 5px; display: flex; flex-direction: column; align-items: center; position: relative; flex: none; }
.on::after { content: ""; width: 3px; height: 3px; background: #000; position: absolute; top: 32px; }
.sep { width: 1px; height: 28px; margin: 4px 6px 0 7px; background: #2c2e2f; flex: none; }
.sep.last { margin-right: 5px; }
.badge { position: absolute; left: 17px; top: 2px; width: 12px; height: 12px; border-radius: 50%; background: #ee2737; color: #fff; font-size: 7px; line-height: 12px; text-align: center; }
.cal { width: 22px; height: 22px; border-radius: 5px; overflow: hidden; background: #fafafa; text-align: center; display: flex; flex-direction: column; }
.cal small { background: #e33b3c; color: #fff; font-size: 5px; font-weight: 700; line-height: 7px; }
.cal span { font-size: 13px; line-height: 14px; color: #333; }
.gpt svg { background: #f3f7fa; color: #222; border-radius: 5px; padding: 2.5px; }
```
